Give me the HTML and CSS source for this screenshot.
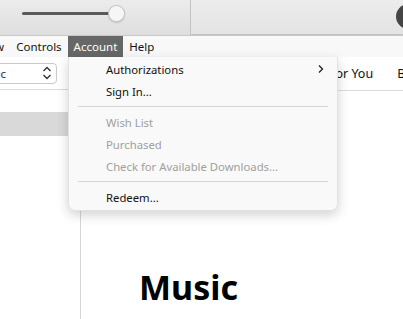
FILE: index.html
```html
<!DOCTYPE html>
<html lang="en">
<head>
  <meta charset="UTF-8" />
  <title>Music</title>
  <link rel="stylesheet" href="styles.css">
</head>
<body>
  <div class="toolbar">
    <div class="volume">
      <div class="track"></div>
      <div class="knob"></div>
    </div>
    <div class="status">
      <div class="avatar"></div>
    </div>
  </div>

  <div class="menubar">
    <span class="menu-item">View</span>
    <span class="menu-item">Controls</span>
    <span class="menu-item active">Account</span>
    <span class="menu-item">Help</span>
  </div>

  <div class="content">
    <div class="sidebar">
      <div class="source-bar">
        <div class="source-select">
          <span>Music</span>
          <svg class="updown" width="10" height="14" viewBox="0 0 10 14">
            <path d="M1.5 5 L5 1.5 L8.5 5 M1.5 9 L5 12.5 L8.5 9" fill="none" stroke="#333" stroke-width="1.4"/>
          </svg>
        </div>
      </div>
      <div class="side-row"></div>
      <div class="side-row selected"></div>
    </div>

    <div class="main">
      <div class="tabs">
        <span>Library</span>
        <span>For You</span>
        <span>Browse</span>
      </div>
      <h1 class="title">Music</h1>
    </div>
  </div>

  <div class="dropdown">
    <div class="drop-item">Authorizations
      <svg class="arrow" width="8" height="10" viewBox="0 0 8 10">
        <path d="M2 1.5 L5.5 5 L2 8.5" fill="none" stroke="#222" stroke-width="1.3"/>
      </svg>
    </div>
    <div class="drop-item">Sign In...</div>
    <div class="separator"></div>
    <div class="drop-item disabled">Wish List</div>
    <div class="drop-item disabled">Purchased</div>
    <div class="drop-item disabled">Check for Available Downloads...</div>
    <div class="separator"></div>
    <div class="drop-item">Redeem...</div>
  </div>
</body>
</html>
```

FILE: styles.css
```css
body {
  margin: 0;
  width: 403px;
  height: 319px;
  overflow: hidden;
  position: relative;
  font-family: "Noto Sans", "Open Sans", sans-serif;
  font-size: 11.3px;
  color: #111;
  background: #fff;
}

.toolbar {
  height: 35px;
  display: flex;
  background: linear-gradient(#ececec, #dedede);
  border-bottom: 1px solid #c8c8c8;
}

.volume {
  width: 190px;
  flex-shrink: 0;
  position: relative;
}

.track {
  position: absolute;
  left: 22px;
  top: 12px;
  width: 92px;
  height: 3px;
  border-radius: 2px;
  background: #5a5a5a;
}

.knob {
  position: absolute;
  left: 108px;
  top: 5px;
  width: 15px;
  height: 15px;
  border-radius: 50%;
  background: #f6f6f6;
  border: 1px solid #c4c4c4;
  box-shadow: 0 1px 2px rgba(0, 0, 0, 0.15);
}

.status {
  flex: 1;
  border-left: 1px solid #c4c4c4;
  border-bottom: 1px solid #c4c4c4;
  background: linear-gradient(#ececec, #e4e4e4);
  position: relative;
  overflow: hidden;
}

.avatar {
  position: absolute;
  left: 205px;
  top: 4px;
  width: 25px;
  height: 25px;
  border-radius: 50%;
  background: #454545;
}

.menubar {
  height: 21px;
  display: flex;
  align-items: stretch;
  background: #f8f8f8;
  margin-left: -27px;
  font-size: 11.5px;
}

.menu-item {
  padding: 0 6px;
  display: flex;
  align-items: center;
}

.menu-item.active {
  background: #676767;
  color: #fff;
}

.content {
  display: flex;
  height: 262px;
}

.sidebar {
  width: 80px;
  flex-shrink: 0;
  border-right: 1px solid #d6d6d6;
}

.source-bar {
  height: 32px;
  border-bottom: 1px solid #dcdcdc;
  display: flex;
  align-items: center;
  overflow: hidden;
}

.source-select {
  margin-left: -30px;
  width: 87px;
  flex-shrink: 0;
  height: 21px;
  border: 1px solid #c9c9c9;
  border-radius: 4px;
  display: flex;
  align-items: center;
  justify-content: space-between;
  padding: 0 4px 0 4px;
  box-sizing: border-box;
  color: #333;
}

.updown {
  display: block;
}

.side-row {
  height: 22px;
}

.side-row.selected {
  height: 24px;
  background: #d9d9d9;
}

.main {
  flex: 1;
  min-width: 0;
  overflow: hidden;
}

.tabs {
  height: 33px;
  border-bottom: 1px solid #dcdcdc;
  display: flex;
  align-items: center;
  gap: 24px;
  padding-left: 183px;
  font-size: 12.5px;
  white-space: nowrap;
}

.title {
  margin: 0;
  padding: 179px 0 0 58px;
  font-size: 34px;
  font-weight: bold;
  line-height: 1;
  color: #000;
}

.dropdown {
  position: absolute;
  left: 68px;
  top: 57px;
  width: 270px;
  padding: 1px 0 2px;
  background: #f9f9f9;
  border: 1px solid #e2e2e2;
  border-top: none;
  border-radius: 0 0 7px 7px;
  box-shadow: 0 4px 12px rgba(0, 0, 0, 0.18);
  box-sizing: border-box;
}

.drop-item {
  height: 22px;
  padding-left: 37px;
  display: flex;
  align-items: center;
  position: relative;
}

.drop-item.disabled {
  color: #a0a0a0;
}

.arrow {
  position: absolute;
  right: 12px;
  top: 6px;
}

.separator {
  height: 1px;
  background: #d6d6d6;
  margin: 4px 9px 4px 9px;
}
```
